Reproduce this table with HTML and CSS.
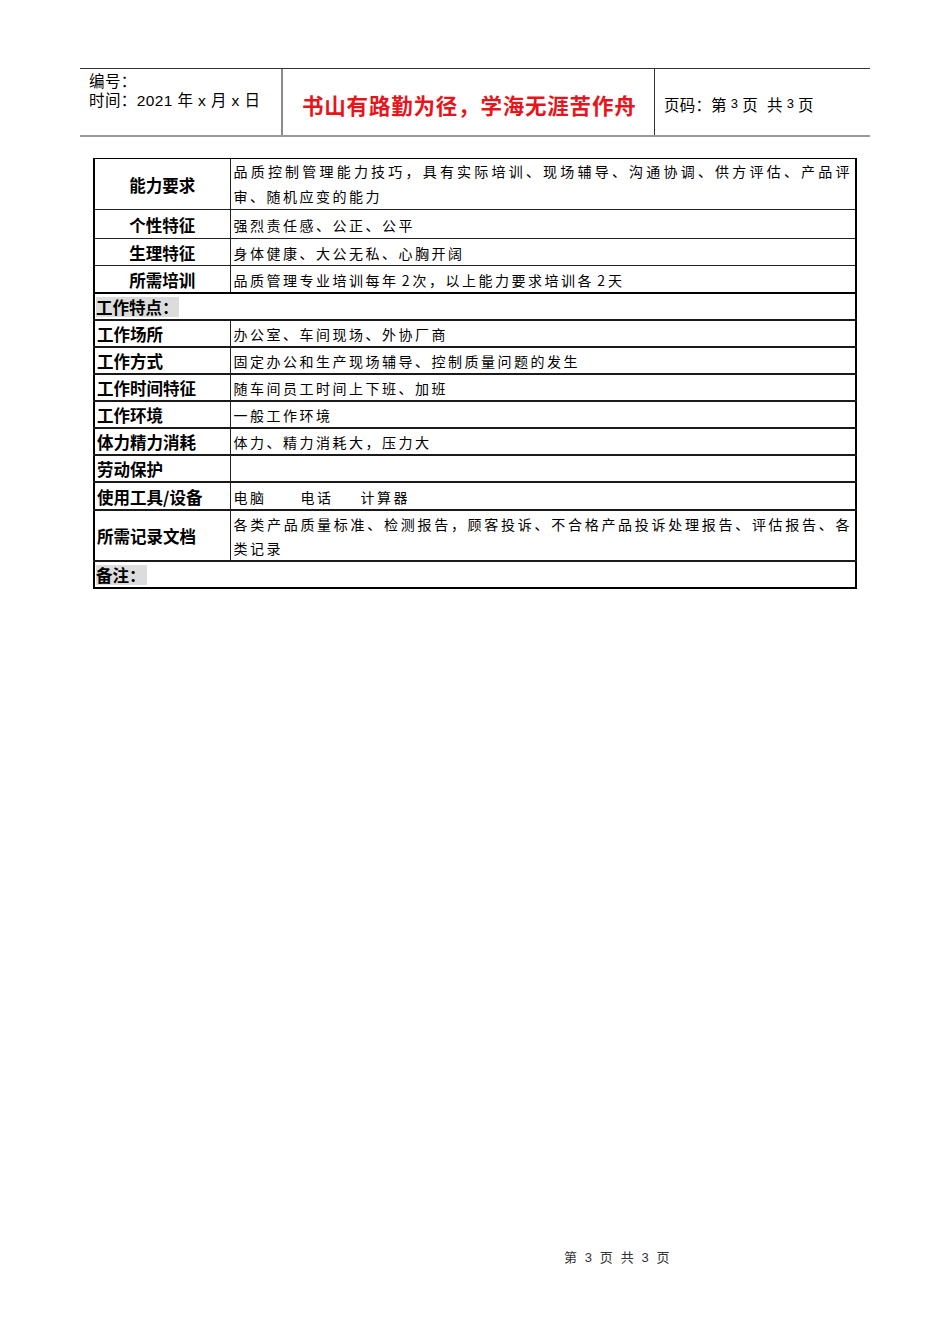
FILE: index.html
```html
<!DOCTYPE html>
<html lang="zh">
<head>
<meta charset="utf-8">
<link rel="stylesheet" href="styles.css">
</head>
<body>
<div class="page">
  <div class="header">
    <div class="h-left">
      <div>编号：</div>
      <div>时间：2021 年 x 月 x 日</div>
    </div>
    <div class="h-mid">书山有路勤为径，学海无涯苦作舟</div>
    <div class="h-right">页码：第<span class="num">3</span>页&nbsp; 共<span class="num">3</span>页</div>
  </div>

  <table class="spec">
    <colgroup><col class="c1"><col class="c2"></colgroup>
    <tr class="r2"><th class="center">能力要求</th><td class="multi">品质控制管理能力技巧，具有实际培训、现场辅导、沟通协调、供方评估、产品评审、随机应变的能力</td></tr>
    <tr class="r-a"><th class="center">个性特征</th><td>强烈责任感、公正、公平</td></tr>
    <tr class="r-b"><th class="center">生理特征</th><td>身体健康、大公无私、心胸开阔</td></tr>
    <tr class="r-b thick"><th class="center">所需培训</th><td>品质管理专业培训每年<span class="n"> 2 </span>次，以上能力要求培训各<span class="n"> 2 </span>天</td></tr>
    <tr class="r-s"><th colspan="2" class="section"><span class="hl">工作特点：</span></th></tr>
    <tr class="r-b lower"><th>工作场所</th><td>办公室、车间现场、外协厂商</td></tr>
    <tr class="r-b lower"><th>工作方式</th><td>固定办公和生产现场辅导、控制质量问题的发生</td></tr>
    <tr class="r-b lower"><th>工作时间特征</th><td>随车间员工时间上下班、加班</td></tr>
    <tr class="r-b lower"><th>工作环境</th><td>一般工作环境</td></tr>
    <tr class="r-b lower"><th>体力精力消耗</th><td>体力、精力消耗大，压力大</td></tr>
    <tr class="r-b lower"><th>劳动保护</th><td></td></tr>
    <tr class="r-c lower"><th>使用工具/设备</th><td>电脑<span class="gap1"></span>电话<span class="gap2"></span>计算器</td></tr>
    <tr class="r3 lower"><th>所需记录文档</th><td class="multi">各类产品质量标准、检测报告，顾客投诉、不合格产品投诉处理报告、评估报告、各类记录</td></tr>
    <tr class="r-b lower last"><th colspan="2" class="section"><span class="hl hl2">备注：</span></th></tr>
  </table>

  <div class="footer">第 3 页 共 3 页</div>
</div>
</body>
</html>
```

FILE: styles.css
```css
html, body {
  margin: 0;
  padding: 0;
  background: #ffffff;
}

.page {
  width: 950px;
  height: 1344px;
  box-sizing: border-box;
  padding-top: 68px;
  position: relative;
  overflow: hidden;
  font-family: "Liberation Sans", "Noto Sans CJK SC", sans-serif;
  color: #000;
}

.header {
  margin-left: 80px;
  width: 790px;
  height: 66px;
  border-top: 1px solid #333;
  border-bottom: 2px solid #9a9a9a;
  display: flex;
}

.h-left {
  width: 192px;
  padding: 3px 0 0 9px;
  font-size: 15.5px;
  line-height: 19px;
  letter-spacing: 0.4px;
  border-right: 2px solid #8a8a8a;
}

.h-mid {
  width: 352px;
  padding-left: 19px;
  display: flex;
  align-items: center;
  color: #e8141b;
  font-size: 21.5px;
  font-weight: 700;
  letter-spacing: 0.8px;
  padding-top: 5px;
  border-right: 1px solid #333;
}

.h-right {
  flex: 1;
  padding-left: 9px;
  display: flex;
  align-items: center;
  font-size: 15.5px;
  letter-spacing: 0.2px;
  padding-top: 3px;
}

.h-right .num {
  font-size: 13px;
  margin: 0 4px;
}

.spec {
  margin: 21px 0 0 93px;
  width: 764px;
  border-collapse: collapse;
  table-layout: fixed;
  border-left: 2px solid #000;
  border-right: 2px solid #000;
}

.spec col.c1 { width: 136px; }

.spec tr:first-child th,
.spec tr:first-child td {
  border-top: 1px solid #000;
}

.spec th,
.spec td {
  border-bottom: 1px solid #222;
  padding: 0;
  vertical-align: middle;
}

.spec th {
  font-family: "Noto Sans CJK SC", sans-serif;
  font-weight: 700;
  font-size: 16.5px;
  text-align: left;
  padding-left: 2px;
  line-height: 20px;
  border-right: 1px solid #222;
  padding-top: 2px;
}

.spec th.center {
  text-align: center;
  padding-left: 0;
}

.spec th.section {
  border-right: none;
  padding-left: 1px;
}

.spec td {
  font-family: "Noto Sans CJK SC", sans-serif;
  font-weight: 400;
  font-size: 14px;
  letter-spacing: 2.5px;
  line-height: 20px;
  padding-left: 3px;
  padding-right: 3px;
  padding-top: 2px;
}

.spec td.multi {
  text-align: justify;
  text-justify: inter-character;
}

.spec td .n {
  letter-spacing: 0;
}

.gap1 { display: inline-block; width: 34px; }
.gap2 { display: inline-block; width: 27px; }

.spec tr.r2 { height: 51px; }
.spec tr.r2 td { line-height: 25px; padding-top: 0; }
.spec tr.r-a { height: 29px; }
.spec tr.r-b { height: 27px; }
.spec tr.r-s { height: 27px; }
.spec tr.r-c { height: 28px; }
.spec tr.r3 { height: 49px; }
.spec tr.r3 td { line-height: 24px; padding-top: 1px; }

.spec tr.thick th,
.spec tr.thick td {
  border-bottom: 2px solid #000;
}

.spec tr.lower th,
.spec tr.lower td {
  border-bottom: 2px solid #1a1a1a;
}

.spec tr.r-s th.section {
  border-bottom: 2px solid #1a1a1a;
}

.spec tr.last th {
  border-bottom: 2px solid #000;
}

.hl {
  display: inline-block;
  background: #dcdcdc;
  width: 83px;
  line-height: 20px;
}

.hl2 {
  width: 51px;
}

.footer {
  position: absolute;
  top: 1247px;
  left: 564px;
  font-size: 13px;
  color: #333;
  letter-spacing: 2.1px;
  font-family: "Liberation Sans", "Noto Sans CJK SC", sans-serif;
}
```
